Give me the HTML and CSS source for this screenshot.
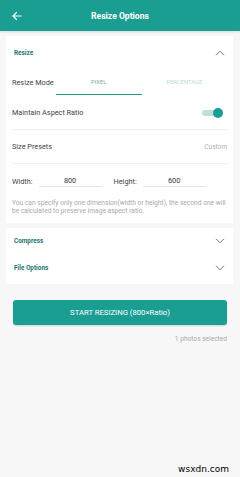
FILE: index.html
```html
<!DOCTYPE html>
<html>
<head>
    <title>Resize Options</title>
    <link rel="stylesheet" href="styles.css">
</head>
<body>
    <div class="app-bar">
        <svg class="back" width="12" height="12" viewBox="0 0 24 24">
            <path d="M20 12H5M11 5l-7 7 7 7" fill="none" stroke="#fff" stroke-width="2.4" stroke-linecap="round" stroke-linejoin="round"/>
        </svg>
        <div class="title">Resize Options</div>
    </div>

    <div class="card">
        <div class="section-head">
            <span class="section-title">Resize</span>
            <svg class="chev" width="10" height="6" viewBox="0 0 10 6">
                <path d="M1 5.2L5 1.2l4 4" fill="none" stroke="#666" stroke-width="0.9"/>
            </svg>
        </div>

        <div class="row mode-row">
            <span class="label">Resize Mode</span>
            <div class="tabs">
                <div class="tab active">PIXEL</div>
                <div class="tab">PERCENTAGE</div>
            </div>
        </div>

        <div class="row divided">
            <span class="label">Maintain Aspect Ratio</span>
            <div class="toggle">
                <span class="track"></span>
                <span class="thumb"></span>
            </div>
        </div>

        <div class="row divided">
            <span class="label">Size Presets</span>
            <span class="muted">Custom</span>
        </div>

        <div class="dims">
            <span class="label">Width:</span>
            <span class="field">800</span>
            <span class="label">Height:</span>
            <span class="field">600</span>
        </div>

        <p class="hint">You can specify only one dimension(width or height), the second one will be calculated to preserve image aspect ratio.</p>
    </div>

    <div class="card collapsed">
        <div class="section-head">
            <span class="section-title">Compress</span>
            <svg class="chev" width="10" height="6" viewBox="0 0 10 6">
                <path d="M1 0.8L5 4.8l4-4" fill="none" stroke="#666" stroke-width="0.9"/>
            </svg>
        </div>
        <div class="section-head">
            <span class="section-title">File Options</span>
            <svg class="chev" width="10" height="6" viewBox="0 0 10 6">
                <path d="M1 0.8L5 4.8l4-4" fill="none" stroke="#666" stroke-width="0.9"/>
            </svg>
        </div>
    </div>

    <button class="start">START RESIZING (800×Ratio)</button>
    <div class="selected">1 photos selected</div>

    <div class="watermark">wsxdn.com</div>
</body>
</html>
```

FILE: styles.css
```css
body {
    margin: 0;
    width: 240px;
    height: 477px;
    background: #f7f7f7;
    font-family: Roboto, "Liberation Sans", sans-serif;
    color: #333;
    display: flex;
    flex-direction: column;
    overflow: hidden;
}

.app-bar {
    height: 31px;
    flex-shrink: 0;
    background: #1a9e92;
    display: flex;
    align-items: center;
    position: relative;
    box-shadow: 0 1px 2px rgba(0, 0, 0, 0.12);
}

.back {
    margin-left: 11px;
}

.title {
    position: absolute;
    left: 0;
    right: 0;
    text-align: center;
    color: #fff;
    font-size: 8.6px;
    font-weight: 700;
}

.card {
    background: #fff;
    margin: 5px 7px 0 6px;
    padding: 0 6px;
}

.section-head {
    height: 34px;
    display: flex;
    align-items: center;
    justify-content: space-between;
    padding: 0 2px 0 2px;
}

.section-title {
    font-size: 6.4px;
    font-weight: 700;
    color: #24766f;
}

.collapsed {
    padding-top: 0;
    padding-bottom: 2px;
}

.collapsed .section-head {
    height: 27px;
}

.row {
    display: flex;
    align-items: center;
    justify-content: space-between;
}

.label {
    font-size: 7.3px;
    color: #444;
}

.mode-row {
    box-sizing: border-box;
    height: 26px;
    align-items: flex-start;
    padding-top: 8px;
}

.tabs {
    display: flex;
    width: 171px;
}

.tab {
    box-sizing: border-box;
    width: 86px;
    height: 17px;
    text-align: center;
    font-size: 5.8px;
    color: #b9dcd8;
    padding-top: 1px;
}

.tab.active {
    color: #7aaba6;
    border-bottom: 1.5px solid #1a9e92;
}

.divided {
    height: 33px;
    border-bottom: 1px solid #f1f1f1;
}

.toggle {
    position: relative;
    width: 22px;
    height: 10px;
    margin-right: 4px;
}

.track {
    position: absolute;
    left: 1px;
    right: 3px;
    top: 2px;
    height: 6px;
    border-radius: 3px;
    background: #bfdfdb;
}

.thumb {
    position: absolute;
    right: 0;
    top: 0;
    width: 10px;
    height: 10px;
    border-radius: 50%;
    background: #1a9e92;
}

.muted {
    font-size: 6.5px;
    color: #b0b0b0;
}

.dims {
    display: flex;
    align-items: center;
    height: 30px;
    padding-top: 2px;
}

.field {
    font-size: 7.3px;
    color: #333;
    width: 63px;
    text-align: center;
    border-bottom: 1px solid #e2e2e2;
    padding-bottom: 1px;
    margin: 0 12px 0 6px;
}

.hint {
    margin: 3px 0 0 0;
    padding-bottom: 7px;
    font-size: 6.65px;
    line-height: 8.4px;
    color: #aaa;
}

.start {
    flex-shrink: 0;
    margin: 16px 13px 0 13px;
    height: 25px;
    border: none;
    border-radius: 3px;
    background: #1a9e92;
    color: #fff;
    font-family: Roboto, "Liberation Sans", sans-serif;
    font-size: 7.7px;
    box-shadow: 0 1px 2px rgba(0, 0, 0, 0.15);
}

.selected {
    text-align: right;
    margin: 10px 13px 0 0;
    font-size: 6.6px;
    color: #aaa;
}

.watermark {
    margin-top: auto;
    margin-bottom: 3px;
    align-self: flex-end;
    margin-right: 11px;
    font-family: "DejaVu Sans", sans-serif;
    font-size: 9px;
    color: #000;
}
```
